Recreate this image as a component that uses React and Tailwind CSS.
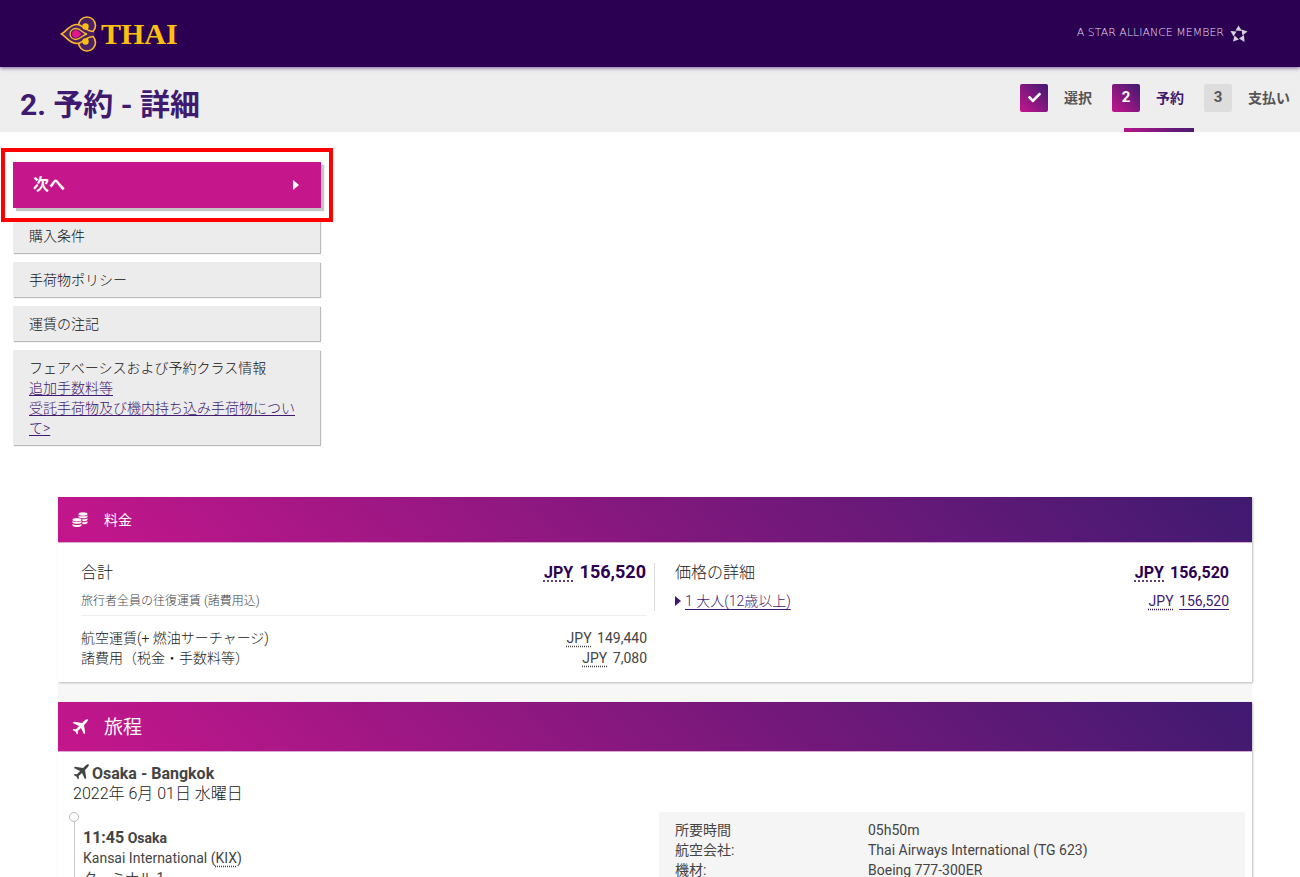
import React from 'react';
import { FaCheck } from 'react-icons/fa';

const ThaiLogo = () => (
    <a href="#" aria-label="THAI" className="flex items-center gap-1 text-[#fdc010]">
        <svg width="37" height="36" viewBox="0 0 37 36" fill="none" stroke="#f9b82c" strokeWidth="1.6">
            <circle cx="27" cy="9.500" r="8.500" fill="#4a1f63" />
            <circle cx="27" cy="26.500" r="8.500" fill="#4a1f63" />
            <path d="M1.500 18C7 15 9 8.500 17 8.500C23 8.500 25 15 34.500 15.500V20.500C25 21 23 27.500 17 27.500C9 27.500 7 21 1.500 18Z" fill="#4a1f63" stroke="none" />
            <path d="M34 15.500C25 15.500 23 8.500 17 8.500C9 8.500 7 15 1.500 18C7 21 9 27.500 17 27.500C23 27.500 25 20.500 34 20.500" />
            <circle cx="25.500" cy="10.500" r="3.200" fill="#fdc010" stroke="none" />
            <circle cx="25.500" cy="25.500" r="3.200" fill="#fdc010" stroke="none" />
            <path d="M27 18C22 17 21 12.500 16 12.500C12.500 12.500 10 15 10 18C10 21 12.500 23.500 16 23.500C21 23.500 22 19 27 18Z" strokeWidth="1.300" />
            <path d="M22 18C19.500 17 18.500 14 16 14C13.800 14 12 15.800 12 18C12 20.200 13.800 22 16 22C18.500 22 19.500 19 22 18Z" fill="#e4148c" stroke="none" />
        </svg>
        <span className="font-['Liberation_Serif'] text-[30px] leading-9 font-bold">THAI</span>
    </a>
);

const StarAlliance = () => (
    <div className="flex items-center gap-[6px] text-[#e6dff0]">
        <span className="font-['DejaVu_Sans'] text-[11px] font-light">A STAR ALLIANCE MEMBER</span>
        <svg width="18" height="18" viewBox="0 0 18 18" fill="#d5d0dc">
            <path d="M8.500 0.500L12 6L5.500 5.500Z" />
            <path d="M17.500 6.500L12.500 10.500L11.500 4.500Z" />
            <path d="M14.500 17L9 13.500L14 10Z" />
            <path d="M3 16.500L4.500 10.500L9 14.500Z" />
            <path d="M0.500 6L6.500 6.500L3.500 11.500Z" />
        </svg>
    </div>
);

const Triangle = () => (
    <svg width="6" height="10" viewBox="0 0 6 10" fill="currentColor"><path d="M0 0L6 5L0 10Z" /></svg>
);

const PlaneIcon = () => (
    <svg width="16" height="16" viewBox="0 0 16 16" fill="currentColor">
        <path d="M15.700 0.300C16.200 1.200 15.500 2.400 14.500 3.400L12 5.900L13.200 14L12 15.200L9 8.900L5.700 12L5.900 14.500L5 15.400L3.400 12.600L0.600 11L1.500 10.100L4 10.300L7.100 7L0.800 4L2 2.800L10.100 4L12.600 1.500C13.600 0.500 14.800 -0.200 15.700 0.300Z" />
    </svg>
);

const CoinsIcon = () => (
    <svg width="16" height="16" viewBox="0 0 16 16" fill="currentColor">
        <ellipse cx="11" cy="2" rx="4.500" ry="1.700" />
        <path d="M6.500 3.400C8 4.700 14 4.700 15.500 3.400V5C14.500 6.300 11 6.600 9 5.900C8 5.500 6.500 5.300 6.500 4.900Z" />
        <path d="M10.300 7.200C12 7.400 14.500 7.100 15.500 6.200V7.900C14.500 9 12 9.400 10.300 9.100Z" />
        <path d="M10.300 10.200C12 10.400 14.500 10.100 15.500 9.200V10.900C14.500 12 12 12.400 10.300 12.100Z" />
        <ellipse cx="5" cy="7.700" rx="4.500" ry="1.700" />
        <path d="M0.500 9.100C2 10.400 8 10.400 9.500 9.100V10.700C8 12.200 2 12.200 0.500 10.700Z" />
        <path d="M0.500 12.100C2 13.400 8 13.400 9.500 12.100V13.800C8 15.500 2 15.500 0.500 13.800Z" />
    </svg>
);

const Amount = ({ value, link, total }) => (
    <span className="whitespace-nowrap">
        <abbr title="Japanese Yen" className={total ? 'mr-0.5 text-base underline decoration-dotted underline-offset-3' : 'mr-0.5 underline decoration-dotted underline-offset-3'}>JPY</abbr>{' '}
        {link ? <a href="#" className="underline underline-offset-3">{value}</a> : value}
    </span>
);

const steps = [
    { label: '選択', done: true },
    { label: '予約', number: 2, active: true },
    { label: '支払い', number: 3 }
];

const StepNav = () => (
    <ol className="flex gap-5 pr-[10px] text-sm font-bold text-[#555]">
        {steps.map(step => (
            <li key={step.label} className={step.active ? 'relative flex items-center gap-4 pb-1 text-[#3f1a70]' : 'flex items-center gap-4 pb-1'}>
                <span className={step.number === 3
                    ? 'grid size-7 place-items-center rounded-xs bg-[#ddd] text-[15px]'
                    : 'grid size-7 place-items-center rounded-xs bg-linear-45/srgb from-[#c5168c] to-[#3f1a70] text-[15px] text-white'}>
                    {step.done ? <FaCheck size={13} /> : step.number}
                </span>
                {step.label}
                {step.active && <span className="absolute -right-[10px] bottom-0 h-1 w-[70px] bg-linear-to-r/srgb from-[#b5168a] to-[#4a1a72]" />}
            </li>
        ))}
    </ol>
);

const SidePanel = ({ children }) => (
    <div className="bg-[#ececec] px-4 pt-2 pb-[7px] text-sm leading-[20px] font-light text-[#111] shadow-[1px_1px_1px_#bbb]">{children}</div>
);

const flightDetails = [
    ['所要時間', '05h50m'],
    ['航空会社:', 'Thai Airways International (TG 623)'],
    ['機材:', 'Boeing 777-300ER']
];

const App = () => (
    <div className="h-screen overflow-hidden bg-white font-['Roboto','Noto_Sans_CJK_JP',sans-serif] text-[#444]">
        <header className="relative flex h-[67px] items-center justify-between bg-[#2b0052] pr-[52px] pl-[60px] shadow-[0_1px_4px_#7a5c9a]">
            <ThaiLogo />
            <StarAlliance />
        </header>

        <div className="flex h-[65px] justify-between bg-[#eee] pl-5">
            <h1 className="pt-2 text-[30px] leading-[60px] font-bold text-[#3f1a70]">2. 予約 - 詳細</h1>
            <StepNav />
        </div>

        <aside className="w-[333px] pt-4">
            <div className="relative z-10 ml-px border-4 border-[#f00] bg-white px-2 py-[10px]">
                <button type="button" className="flex h-[46px] w-full items-center justify-between bg-[#c5168c] pr-[22px] pl-5 font-bold text-white shadow-[3px_3px_1px_#c4c4c4]">
                    次へ
                    <Triangle />
                </button>
            </div>
            <div className="-mt-1 mr-[13px] ml-[13px] space-y-[9px]">
                <SidePanel>購入条件</SidePanel>
                <SidePanel>手荷物ポリシー</SidePanel>
                <SidePanel>運賃の注記</SidePanel>
                <SidePanel>
                    <p>フェアベーシスおよび予約クラス情報</p>
                    <a href="#" className="text-[#3f1a70] underline underline-offset-2">追加手数料等</a><br />
                    <a href="#" className="text-[#3f1a70] underline underline-offset-2">受託手荷物及び機内持ち込み手荷物について&gt;</a>
                </SidePanel>
            </div>
        </aside>

        <main className="mt-[52px] mr-12 ml-[58px] bg-[#f7f7f7]">
            <section className="bg-white shadow-[1px_1px_2px_#bbb]">
                <h2 className="flex h-[46px] items-center gap-4 border-b border-[#d9a9cf] bg-linear-45/srgb from-[#c5168c] to-[#3f1a70] px-[14px] text-sm text-white">
                    <CoinsIcon />
                    料金
                </h2>
                <div className="grid grid-cols-2 px-[23px] pt-5 pb-[14px]">
                    <div>
                        <div className="border-r border-[#ddd] pr-2">
                            <div className="flex h-[20px] items-center justify-between">
                                <h3 className="text-base font-light text-[#222]">合計</h3>
                                <strong className="text-lg leading-5 text-[#2b0052]"><Amount value="156,520" total /></strong>
                            </div>
                            <p className="mt-2 text-xs leading-5 font-light">旅行者全員の往復運賃 (諸費用込)</p>
                        </div>
                        <dl className="mt-1 mr-2 grid auto-rows-[20px] grid-cols-[1fr_auto] border-t border-[#eee] pt-3 text-sm leading-[20px]">
                            <dt className="font-light text-[#222]">航空運賃(+ 燃油サーチャージ)</dt>
                            <dd className="text-right"><Amount value="149,440" /></dd>
                            <dt className="font-light text-[#222]">諸費用（税金・手数料等）</dt>
                            <dd className="text-right"><Amount value="7,080" /></dd>
                        </dl>
                    </div>
                    <div className="pl-5">
                        <div className="flex h-[20px] items-center justify-between">
                            <h3 className="text-base font-light text-[#222]">価格の詳細</h3>
                            <strong className="text-base text-[#2b0052]"><Amount value="156,520" /></strong>
                        </div>
                        <div className="mt-2 flex items-center justify-between text-sm leading-5 text-[#3f1a70]">
                            <a href="#" className="flex items-center gap-1 font-light"><Triangle /><span className="underline underline-offset-3">1 大人(12歳以上)</span></a>
                            <Amount value="156,520" link />
                        </div>
                    </div>
                </div>
            </section>

            <section className="mt-5 bg-white shadow-[1px_1px_2px_#bbb]">
                <h2 className="flex h-[50px] items-center gap-4 border-b border-[#d9a9cf] bg-linear-45/srgb from-[#c5168c] to-[#3f1a70] px-[14px] text-[19px] text-white">
                    <PlaneIcon />
                    <span className="pt-1">旅程</span>
                </h2>
                <div className="px-[15px] pt-3 text-base leading-[20px]">
                    <h3 className="flex gap-[3px] font-bold"><PlaneIcon />Osaka - Bangkok</h3>
                    <p className="font-light text-[#222]">2022年 6月 01日 水曜日</p>
                </div>
                <div className="grid grid-cols-2 pt-2">
                    <div className="flex pl-[11px]">
                        <div className="flex w-[10px] flex-col items-center">
                            <span className="size-[10px] rounded-full border border-[#bbb]" />
                            <span className="w-px flex-1 bg-[#ccc]" />
                        </div>
                        <div className="pt-4 pl-1 text-sm leading-[20px]">
                            <p className="h-5 font-bold"><span className="text-base leading-5">11:45</span> Osaka</p>
                            <p className="h-5">Kansai International (<abbr title="Kansai" className="underline decoration-dotted underline-offset-3">KIX</abbr>)</p>
                            <p>ターミナル 1</p>
                        </div>
                    </div>
                    <dl className="mr-[7px] ml-1 grid auto-rows-[20px] grid-cols-[193px_1fr] bg-[#f5f5f5] px-4 py-2 text-sm leading-[20px]">
                        {flightDetails.map(([label, value]) => (
                            <React.Fragment key={label}>
                                <dt>{label}</dt>
                                <dd>{value}</dd>
                            </React.Fragment>
                        ))}
                    </dl>
                </div>
            </section>
        </main>
    </div>
);

export default App;
